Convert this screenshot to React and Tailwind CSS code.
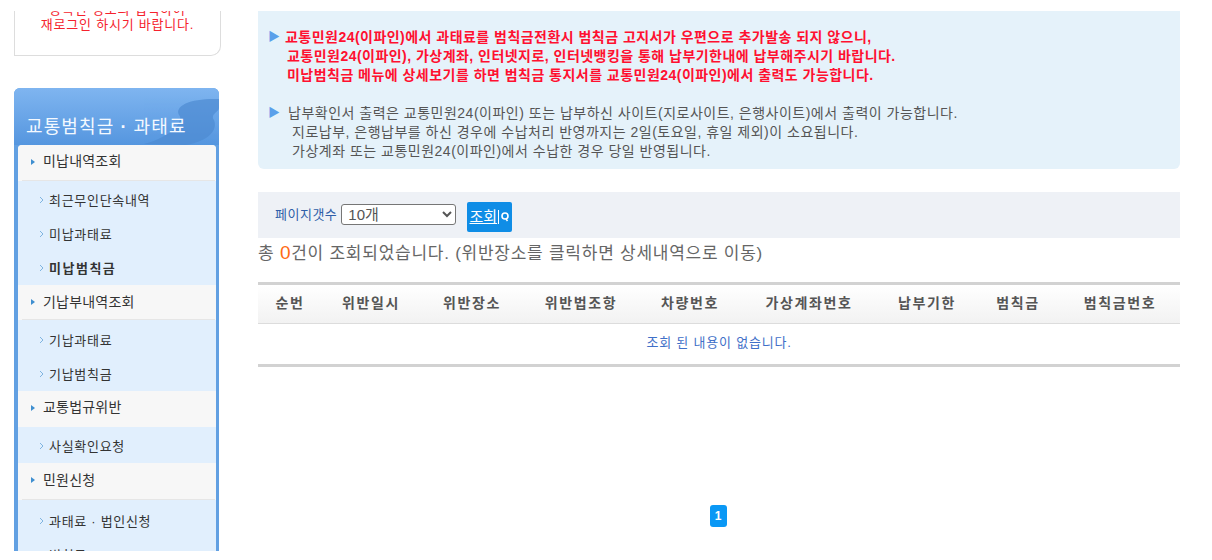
import React from "react";

const kr = "font-['Liberation_Sans','Noto_Sans_CJK_KR',sans-serif]";

function Group({ title, line = true, head = "h-[36px] pb-[3px]", sub = "pt-[2px]", items }) {
  return (
    <div>
      <div className={head + " bg-[#f7f7f7] relative flex items-center pl-[13px] text-[14px] tracking-[0.2px] text-[#333]"}>
        <span className="w-0 h-0 border-y-[3px] border-y-transparent border-l-[4px] border-l-[#3f8fd0] mr-[8px]"></span>
        {title}
        {line && <div className="absolute left-[4px] right-[1px] bottom-0 h-px bg-[#e6e6e6]"></div>}
      </div>
      <div className={sub + " bg-[#e1effd]"}>
        {items.map((it) => (
          <div key={it.label} className={"h-[34px] pt-[2px] flex items-center pl-[21px] text-[13px] text-[#333] " + (it.active ? "font-bold text-[#111] tracking-[1.5px]" : "tracking-[0.7px]")}>
            <svg width="5" height="8" viewBox="0 0 5 8" className="mr-[5px] mb-[2px]">
              <path d="M1 1l3 3-3 3" fill="none" stroke="#7fb4e0" strokeWidth="1" />
            </svg>
            {it.label}
          </div>
        ))}
      </div>
    </div>
  );
}

function Sidebar() {
  return (
    <div className="w-[207px] ml-[14px] shrink-0">
      <div className="h-[45px] mt-[11px] overflow-hidden border-x border-b border-[#ddd] rounded-br-[10px] flex flex-col justify-end items-center pb-[23px] text-[13px] leading-[15px] tracking-[0.8px] text-[#f5222d]">
        <p className="whitespace-nowrap">등록된 정보의 입력하여</p>
        <p className="whitespace-nowrap">재로그인 하시기 바랍니다.</p>
      </div>
      <div className="mt-[32px] w-[205px] rounded-t-[6px] bg-[#62a0e2] px-[4px] overflow-hidden">
        <div className="relative h-[57px] -mx-[4px] bg-gradient-to-b from-[#7fb5f0] to-[#5596df] overflow-hidden">
          <svg width="205" height="57" viewBox="0 0 205 57" className="absolute left-0 top-0 opacity-70">
            <path d="M205 11C178 10 160 17 165 27C170 32 160 48 130 56L172 57C195 53 204 42 200 32C196 26 205 24 205 20Z" fill="#4d8bd2" />
          </svg>
          <div className="relative pl-[12px] pt-[27px] text-[18px] leading-[24px] tracking-[1.1px] text-[#f4f9ff] whitespace-nowrap">
            교통범칙금 <b>·</b> 과태료
          </div>
        </div>
        <div className="rounded-t-[4px] overflow-hidden bg-[#e1effd] mr-[-1px] h-[406px]">
          <Group title="미납내역조회" items={[{ label: "최근무인단속내역" }, { label: "미납과태료" }, { label: "미납범칙금", active: true }]} />
          <Group title="기납부내역조회" head="h-[35px] pb-[1px]" sub="pt-[3px]" items={[{ label: "기납과태료" }, { label: "기납범칙금" }]} />
          <Group title="교통법규위반" line={false} items={[{ label: "사실확인요청" }]} />
          <Group title="민원신청" head="h-[37px] pb-[3px]" sub="pt-[4px]" items={[{ label: "과태료 · 법인신청" }, { label: "범칙금" }]} />
        </div>
      </div>
    </div>
  );
}

function Notice() {
  return (
    <div className="h-[158px] bg-[#e5f2fa] rounded-b-[6px] pt-[17px] pl-[10px] text-[14px] leading-[19px]">
      <div className="font-bold text-[#ff1030] tracking-[0.47px]">
        <p className="flex whitespace-pre"><span className="text-[#5aa0ea] w-[17px] text-[12px]">▶</span>교통민원24(이파인)에서 과태료를 범칙금전환시 범칙금 고지서가 우편으로 추가발송 되지 않으니,</p>
        <p className="pl-[19px]">교통민원24(이파인), 가상계좌, 인터넷지로, 인터넷뱅킹을 통해 납부기한내에 납부해주시기 바랍니다.</p>
        <p className="pl-[19px]">미납범칙금 메뉴에 상세보기를 하면 범칙금 통지서를 교통민원24(이파인)에서 출력도 가능합니다.</p>
      </div>
      <div className="mt-[19px] text-[#555] tracking-[0.5px]">
        <p className="flex whitespace-pre"><span className="text-[#5aa0ea] w-[20px] text-[12px]">▶</span>납부확인서 출력은 교통민원24(이파인) 또는 납부하신 사이트(지로사이트, 은행사이트)에서 출력이 가능합니다.</p>
        <p className="pl-[24px]">지로납부, 은행납부를 하신 경우에 수납처리 반영까지는 2일(토요일, 휴일 제외)이 소요됩니다.</p>
        <p className="pl-[24px]">가상계좌 또는 교통민원24(이파인)에서 수납한 경우 당일 반영됩니다.</p>
      </div>
    </div>
  );
}

const cols = [
  ["순번", "w-[50px]"],
  ["위반일시", "w-[112px]"],
  ["위반장소", "w-[90px]"],
  ["위반법조항", "w-[128px]"],
  ["차량번호", "w-[90px]"],
  ["가상계좌번호", "w-[148px]"],
  ["납부기한", "w-[88px]"],
  ["범칙금", "w-[94px]"],
  ["범칙금번호", "w-[110px]"],
];

function Results() {
  return (
    <div>
      <div className="mt-[23px] h-[46px] bg-[#eef1f6] flex items-center pl-[17px]">
        <span className="text-[13px] tracking-[0.5px] text-[#2f5ea8] mr-[4px]">페이지갯수</span>
        <select className="w-[115px] h-[21px] mb-[2px] bg-white border border-[#767676] rounded-[3px] text-[15px] text-[#555] pl-[2px]">
          <option>10개</option>
        </select>
        <button className="ml-[11px] mt-[4px] w-[45px] h-[30px] bg-[#0f8de6] rounded-[2px] text-[15px] text-white flex items-center justify-center">
          <span className="underline">조회</span>
          <svg width="13" height="16" viewBox="0 0 13 16">
            <path d="M1.5 1v14" stroke="#fff" strokeWidth="1" />
            <circle cx="8" cy="7" r="3" fill="none" stroke="#fff" strokeWidth="1.6" />
            <path d="M9 10l1.5 2" stroke="#fff" strokeWidth="1.6" />
          </svg>
        </button>
      </div>
      <p className="mt-[4px] h-[24px] text-[17px] leading-[24px] tracking-[0.75px] text-[#666] whitespace-nowrap">
        총 <span className="text-[#ff6a13] text-[19px] leading-none">0</span>건이 조회되었습니다. (위반장소를 클릭하면 상세내역으로 이동)
      </p>
      <div className="mt-[16px] border-t-[3px] border-[#d2d2d2]">
        <div className="h-[39px] pb-[2px] flex items-center pl-[7px] bg-gradient-to-b from-white to-[#f2f2f2] border-b border-[#dcdcdc] text-[14px] font-bold text-[#555] tracking-[1.6px]">
          {cols.map(([label, w]) => (
            <div key={label} className={w + " text-center shrink-0"}>{label}</div>
          ))}
        </div>
        <div className="h-[40px] pb-[2px] flex items-center justify-center text-[13px] tracking-[0.8px] text-[#3f70c8]">조회 된 내용이 없습니다.</div>
        <div className="h-[3px] bg-[#d2d2d2]"></div>
      </div>
      <div className="mt-[138px] flex justify-center pr-[2px]">
        <span className="w-[17px] h-[22px] bg-[#0a98f5] rounded-[3px] text-white text-[12px] font-bold flex items-center justify-center">1</span>
      </div>
    </div>
  );
}

export default function App() {
  return (
    <div className={kr + " h-[551px] w-[1212px] overflow-hidden bg-white flex"}>
      <Sidebar />
      <div className="w-[922px] ml-[37px] pt-[11px]">
        <Notice />
        <Results />
      </div>
    </div>
  );
}
